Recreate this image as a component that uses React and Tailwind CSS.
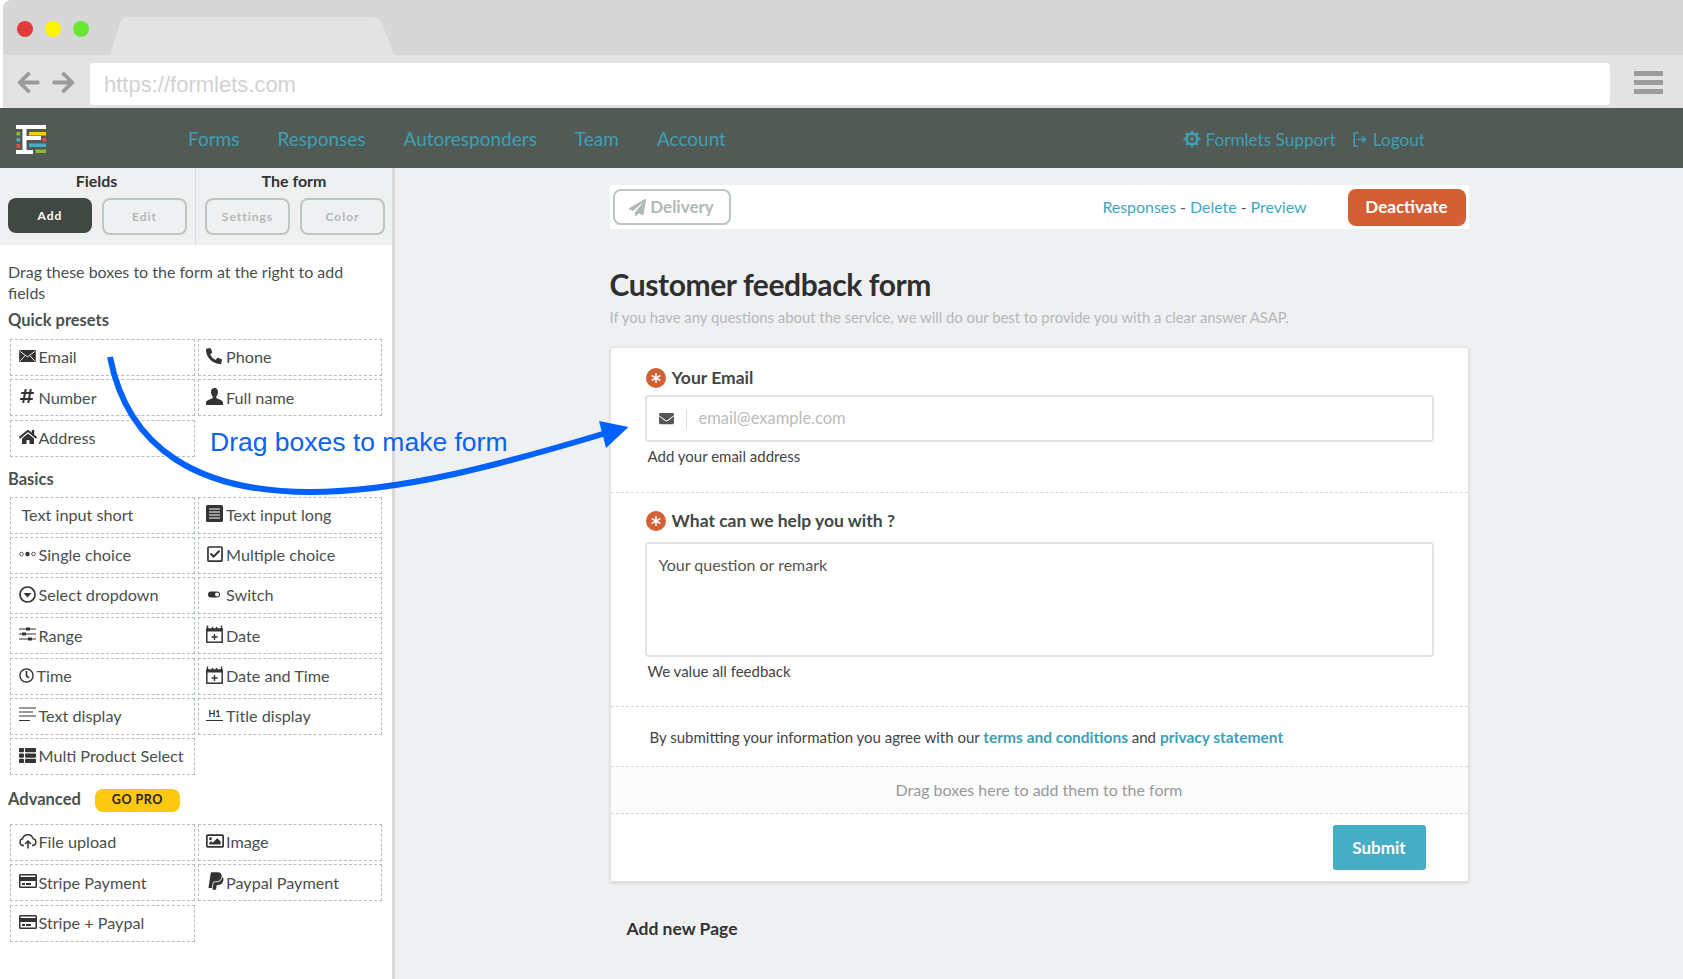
import React from "react";
import {
  FaArrowLeft,
  FaArrowRight,
  FaAsterisk,
  FaEnvelope,
  FaHashtag,
  FaHome,
  FaPaperPlane,
  FaPaypal,
  FaPhoneAlt,
  FaRegCheckSquare,
  FaRegClock,
  FaRegCreditCard,
  FaRegImage,
  FaThList,
} from "react-icons/fa";

const EnvelopeBox = () => (
  <svg viewBox="0 0 18 13" className="w-[17px] h-[12px]">
    <rect width="18" height="13" rx="1" fill="#333" />
    <path d="M1 1.500l8 6 8-6M1 12l5.500-6M17 12l-5.500-6" stroke="#fff" strokeWidth="1" fill="none" />
  </svg>
);

const PersonIcon = () => (
  <svg viewBox="0 0 17 17" className="w-[17px] h-[17px]">
    <path
      d="M8.500 0C6 0 5 1.800 5 4c0 1.800.7 3.400 1.700 4.400.3.500.2 1.400-.4 1.800C4.400 11.400 0 12 0 14.500V17h17v-2.500c0-2.500-4.400-3.100-6.300-4.300-.6-.4-.7-1.300-.4-1.800C11.300 7.400 12 5.800 12 4c0-2.200-1-4-3.500-4z"
      fill="#333"
    />
  </svg>
);

const TextLong = () => (
  <svg viewBox="0 0 17 17" className="w-[17px] h-[17px]">
    <rect width="17" height="17" rx="1.500" fill="#333" />
    <path d="M3 4h11M3 7h11M3 10h11M3 13h11" stroke="#fff" strokeWidth="1.200" />
  </svg>
);

const Dots = () => (
  <svg viewBox="0 0 17 6" className="w-[17px] h-[6px]">
    <circle cx="2.500" cy="3" r="1.800" fill="none" stroke="#333" strokeWidth="0.8" />
    <circle cx="8.500" cy="3" r="2.200" fill="#333" />
    <circle cx="14.500" cy="3" r="1.800" fill="none" stroke="#333" strokeWidth="0.8" />
  </svg>
);

const SelectIcon = () => (
  <svg viewBox="0 0 17 17" className="w-[17px] h-[17px]">
    <circle cx="8.500" cy="8.500" r="7.500" fill="none" stroke="#333" strokeWidth="1.700" />
    <path d="M4.500 7h8l-4 4.500z" fill="#333" />
  </svg>
);

const SwitchIcon = () => (
  <svg viewBox="0 0 17 17" className="w-[17px] h-[17px]">
    <rect x="2" y="5.500" width="12" height="6" rx="3" fill="#333" />
    <circle cx="11" cy="8.500" r="2" fill="#fff" />
  </svg>
);

const RangeIcon = () => (
  <svg viewBox="0 0 17 14" className="w-[17px] h-[14px]">
    <path d="M0 2h17M0 7h17M0 12h17" stroke="#333" strokeWidth="1" />
    <rect x="7" y="0.500" width="4" height="3" fill="#333" />
    <rect x="3" y="5.500" width="4" height="3" fill="#333" />
    <rect x="9" y="10.500" width="4" height="3" fill="#333" />
  </svg>
);

const DateIcon = () => (
  <svg viewBox="0 0 17 18" className="w-[17px] h-[18px]">
    <rect x="0.800" y="4" width="15.400" height="13.200" fill="none" stroke="#333" strokeWidth="1.500" />
    <rect x="0.800" y="4" width="15.400" height="2.500" fill="#333" />
    <path d="M1.500 0.500v4M6.500 2v2M10.500 2v2M15.500 0.500v4M8.500 9v6M5.500 12h6" stroke="#333" strokeWidth="1.400" />
  </svg>
);

const TextDisplay = () => (
  <svg viewBox="0 0 17 15" className="w-[17px] h-[15px]">
    <path d="M0 1h17M0 5h14M0 9h17M0 13.500h11" stroke="#333" strokeWidth="1.200" />
  </svg>
);

const TitleIcon = () => (
  <span className="w-[17px] border-b border-[#333] text-[9px] leading-[10px] font-bold text-center text-[#333] pb-[1px]">
    H1
  </span>
);

const UploadIcon = () => (
  <svg viewBox="0 0 18 15" className="w-[18px] h-[15px]">
    <path
      d="M5 11.500H4.200A3.400 3.400 0 0 1 3.600 4.800 5.400 5.400 0 0 1 14 4.600a3.500 3.500 0 0 1 0 6.900h-1"
      fill="none"
      stroke="#333"
      strokeWidth="1.400"
    />
    <path d="M9 14.500V7.500M6 10l3-3 3 3" fill="none" stroke="#333" strokeWidth="1.500" />
  </svg>
);

const GearIcon = () => (
  <svg viewBox="0 0 18 18" className="w-[18px] h-[18px]">
    <circle cx="9" cy="9" r="5.400" fill="none" stroke="#3d9fb5" strokeWidth="2.600" />
    <circle cx="9" cy="9" r="1.700" fill="#3d9fb5" />
    <path
      d="M9 0.500v3M9 14.500v3M0.500 9h3M14.500 9h3M3 3l2.100 2.100M12.900 12.900L15 15M15 3l-2.100 2.100M5.100 12.900L3 15"
      stroke="#3d9fb5"
      strokeWidth="2.400"
    />
  </svg>
);

const LogoutIcon = () => (
  <svg viewBox="0 0 14 15" className="w-[14px] h-[15px]">
    <path d="M5 1H1.200v13H5" fill="none" stroke="#3d9fb5" strokeWidth="1.600" />
    <path d="M4.500 7.500h7M9 4.500l3.500 3-3.500 3" fill="none" stroke="#3d9fb5" strokeWidth="1.600" />
  </svg>
);

const Logo = () => (
  <svg viewBox="5 115 50 45" className="w-[50px] h-[45px] shrink-0">
    <rect x="15" y="124" width="30" height="4" fill="#fff" />
    <rect x="15" y="149" width="17" height="4" fill="#fff" />
    <rect x="21.500" y="124" width="4" height="29" fill="#fff" />
    <rect x="25" y="135" width="15" height="4" fill="#fff" />
    <rect x="28" y="131" width="17" height="3.500" fill="#fdc90f" />
    <rect x="28" y="142.500" width="17" height="3.500" fill="#45adc4" />
    <rect x="34.500" y="148.500" width="10.500" height="3.500" fill="#8ebc2f" />
    <rect x="15.500" y="131" width="3.500" height="3.500" fill="#8ebc2f" />
    <rect x="15.500" y="137" width="3.500" height="3.500" fill="#45adc4" />
    <rect x="15.500" y="143" width="3.500" height="3.500" fill="#e8503a" />
    <rect x="41.500" y="137" width="3.500" height="3.500" fill="#e8503a" />
  </svg>
);

const ic = "text-[#333] shrink-0";

const presets = [
  { label: "Email", icon: <EnvelopeBox /> },
  { label: "Phone", icon: <FaPhoneAlt className={ic} size={16} /> },
  { label: "Number", icon: <FaHashtag className={ic} size={16} /> },
  { label: "Full name", icon: <PersonIcon /> },
  { label: "Address", icon: <FaHome className={ic} size={18} /> },
];

const basics = [
  { label: "Text input short", indent: true },
  { label: "Text input long", icon: <TextLong /> },
  { label: "Single choice", icon: <Dots /> },
  { label: "Multiple choice", icon: <FaRegCheckSquare className={ic} size={18} /> },
  { label: "Select dropdown", icon: <SelectIcon /> },
  { label: "Switch", icon: <SwitchIcon /> },
  { label: "Range", icon: <RangeIcon /> },
  { label: "Date", icon: <DateIcon /> },
  { label: "Time", icon: <FaRegClock className={ic} size={15} />, tight: true },
  { label: "Date and Time", icon: <DateIcon /> },
  { label: "Text display", icon: <TextDisplay /> },
  { label: "Title display", icon: <TitleIcon /> },
  { label: "Multi Product Select", icon: <FaThList className={ic} size={17} /> },
];

const advanced = [
  { label: "File upload", icon: <UploadIcon /> },
  { label: "Image", icon: <FaRegImage className={ic} size={18} /> },
  { label: "Stripe Payment", icon: <FaRegCreditCard className={ic} size={18} /> },
  { label: "Paypal Payment", icon: <FaPaypal className={ic} size={20} /> },
  { label: "Stripe + Paypal", icon: <FaRegCreditCard className={ic} size={18} /> },
];

const FieldBox = ({ label, icon, indent, tight }) => (
  <div className="h-[37px] flex items-center gap-[2px] pl-[7.500px] border border-dashed border-[#b4c0ba] text-[16.200px] text-[#4a4f4c]">
    {icon && (
      <span className={tight ? "w-[16px] flex shrink-0 -mt-[2px]" : "w-[18px] flex shrink-0 -mt-[3px]"}>{icon}</span>
    )}
    <span className={indent ? "pl-[3px]" : ""}>{label}</span>
  </div>
);

const FieldGrid = ({ items }) => (
  <div className="grid grid-cols-2 gap-x-[3px] gap-y-[3.250px] w-[372px] ml-[2px]">
    {items.map((item) => (
      <FieldBox key={item.label} {...item} />
    ))}
  </div>
);

const TabButton = ({ children, active }) => (
  <button
    className={
      active
        ? "w-[84px] h-[35px] rounded-lg bg-[#3f4842] text-white text-[12px] font-bold tracking-[1px]"
        : "w-[85px] h-[37px] rounded-lg border-2 border-[#bcc7c2] text-[#aebab4] text-[12px] font-bold tracking-[1px]"
    }
  >
    {children}
  </button>
);

const Star = () => (
  <span className="w-[20px] h-[20px] rounded-full bg-[#d35f35] flex items-center justify-center shrink-0">
    <FaAsterisk className="text-white" size={10} />
  </span>
);

const Sidebar = () => (
  <aside className="w-[395px] shrink-0 bg-white border-r-[3px] border-[#d9d9d9]">
    <div className="h-[77px] bg-[#eff0f2] grid grid-cols-[196px_196px]">
      <div className="border-r border-[#dcdde0] pl-[8px]">
        <div className="h-[26px] mb-[4px] flex items-center justify-center font-bold text-[16px] text-[#333] pr-[10px]">
          Fields
        </div>
        <div className="flex gap-[10px]">
          <TabButton active>Add</TabButton>
          <TabButton>Edit</TabButton>
        </div>
      </div>
      <div className="pl-[9px]">
        <div className="h-[26px] mb-[4px] flex items-center justify-center font-bold text-[16px] text-[#333] pr-[9px]">
          The form
        </div>
        <div className="flex gap-[10px]">
          <TabButton>Settings</TabButton>
          <TabButton>Color</TabButton>
        </div>
      </div>
    </div>
    <div className="px-[8px] pt-[16px]">
      <p className="max-w-[350px] text-[16px] leading-[21px] text-[#4a4f4c]">
        Drag these boxes to the form at the right to add fields
      </p>
      <h3 className="mt-[6px] mb-[8px] text-[16.500px] leading-[22px] font-bold text-[#4a524d]">Quick presets</h3>
      <FieldGrid items={presets} />
      <h3 className="mt-[11px] mb-[7px] text-[16.500px] leading-[22px] font-bold text-[#4a524d]">Basics</h3>
      <FieldGrid items={basics} />
      <div className="mt-[12px] mb-[13px] h-[24px] flex items-center gap-[14px]">
        <h3 className="text-[16.500px] font-bold text-[#4a524d]">Advanced</h3>
        <span className="w-[85px] h-[23px] mt-[2px] rounded-lg bg-[#fdc90f] flex items-center justify-center text-[12.500px] font-bold tracking-[0.5px] text-[#222]">
          GO PRO
        </span>
      </div>
      <FieldGrid items={advanced} />
    </div>
  </aside>
);

const FormCard = () => (
  <div className="mt-[20px] h-[535px] bg-white rounded-[3px] border border-[#e3e3e3] shadow-[0_1px_3px_rgba(0,0,0,0.15)] flex flex-col text-[#444]">
    <section className="h-[144px] px-[34px] pt-[18px]">
      <div className="flex items-center gap-[6px] pl-[1px] h-[24px] text-[17.500px] font-bold text-[#3f4842]">
        <Star />
        Your Email
      </div>
      <div className="mt-[5px] h-[47px] rounded-[4px] border-2 border-[#e3e3e3] flex items-center">
        <span className="w-[40px] h-[20px] flex items-center justify-center border-r border-[#ddd] text-[#555]">
          <FaEnvelope size={15} />
        </span>
        <span className="pl-[12px] text-[16.500px] text-[#bbb]">email@example.com</span>
      </div>
      <p className="mt-[4px] pl-[3px] text-[15px] leading-[20px] text-[#444]">Add your email address</p>
    </section>
    <section className="h-[214px] px-[34px] pt-[16px] border-t border-dashed border-[#d8d8d8]">
      <div className="flex items-center gap-[6px] pl-[1px] h-[24px] text-[17.500px] font-bold text-[#3f4842]">
        <Star />
        What can we help you with ?
      </div>
      <div className="mt-[9px] h-[115px] rounded-[4px] border-2 border-[#e3e3e3] pl-[12px] pt-[11px] text-[16px] leading-[20px] text-[#555]">
        Your question or remark
      </div>
      <p className="mt-[4px] pl-[3px] text-[15px] leading-[20px] text-[#444]">We value all feedback</p>
    </section>
    <section className="h-[60px] px-[39px] flex items-center border-t border-dashed border-[#d8d8d8] text-[15px] text-[#444]">
      <p className="pt-[2px]">
        By submitting your information you agree with our{" "}
        <a className="font-bold text-[15.500px] text-[#3d9fb5]">terms and conditions</a> and{" "}
        <a className="font-bold text-[15.500px] text-[#3d9fb5]">privacy statement</a>
      </p>
    </section>
    <section className="h-[47px] flex items-center justify-center border-t border-dashed border-[#d8d8d8] bg-[#fcfcfc] text-[16px] text-[#999]">
      Drag boxes here to add them to the form
    </section>
    <section className="flex-1 flex items-center justify-end pr-[42px] border-t border-dashed border-[#d8d8d8] bg-[#fdfdfd]">
      <button className="w-[93px] h-[45px] rounded-[3px] bg-[#45adc4] text-white text-[17px] font-bold">Submit</button>
    </section>
  </div>
);

const Main = () => (
  <main className="flex-1 bg-[#eff0f2]">
    <div className="w-[859px] mx-auto pt-[17px]">
      <div className="h-[44px] bg-white flex items-center justify-between pl-[3px] pr-[3px]">
        <button className="w-[118px] h-[36px] rounded-lg border-2 border-[#bcc7c2] flex items-center justify-center gap-[4px] text-[17px] font-bold text-[#aebab4]">
          <FaPaperPlane size={17} />
          Delivery
        </button>
        <div className="flex items-center gap-[41px]">
          <div className="text-[16px] text-[#555] tracking-[-0.05px]">
            <a className="text-[#45a7bd]">Responses</a> - <a className="text-[#45a7bd]">Delete</a> -{" "}
            <a className="text-[#45a7bd]">Preview</a>
          </div>
          <button className="w-[118px] h-[37px] rounded-lg bg-[#d35f35] text-white text-[17px] font-bold">
            Deactivate
          </button>
        </div>
      </div>
      <h1 className="mt-[35px] h-[40px] leading-[40px] text-[30px] font-bold text-[#2f2f2f] tracking-[-0.4px]">
        Customer feedback form
      </h1>
      <p className="mt-[3px] h-[20px] leading-[20px] text-[14.850px] text-[#b5b8b8]">
        If you have any questions about the service, we will do our best to provide you with a clear answer ASAP.
      </p>
      <FormCard />
      <div className="mt-[36px] ml-[17px] text-[17.500px] font-bold leading-[22px] text-[#333]">Add new Page</div>
    </div>
  </main>
);

const DragArrow = () => (
  <svg viewBox="0 0 1683 979" className="absolute inset-0 w-full h-full pointer-events-none">
    <path d="M110 357C128 450 200 492 310 492C400 492 500 465 606 433" fill="none" stroke="#0061fe" strokeWidth="6" />
    <path d="M599 421L628.500 427L606 448Z" fill="#0061fe" />
  </svg>
);

export default function App() {
  return (
    <div className="relative w-[1683px] h-[979px] overflow-hidden bg-white flex flex-col [font-family:Lato,sans-serif]">
      <div className="ml-[3px] h-[55px] bg-[#d7d7d7] rounded-tl-lg flex items-start shrink-0">
        <div className="flex gap-[12px] pl-[14px] pt-[21px]">
          <span className="w-[16px] h-[16px] rounded-full bg-[#e33b3b]" />
          <span className="w-[16px] h-[16px] rounded-full bg-[#fcf500]" />
          <span className="w-[16px] h-[16px] rounded-full bg-[#66e82e]" />
        </div>
        <svg viewBox="0 0 284 38" className="w-[284px] h-[38px] mt-[17px] ml-[21px]">
          <path d="M0 38L10 6Q12 0 18 0H262Q270 0 272 6L284 38Z" fill="#e3e3e3" />
        </svg>
      </div>
      <div className="ml-[3px] h-[53px] bg-[#e3e3e3] flex items-center shrink-0">
        <div className="flex items-center gap-[10px] pl-[13px] text-[#9b9b9b] mt-[1px]">
          <FaArrowLeft size={25} />
          <FaArrowRight size={25} />
        </div>
        <div className="ml-[14px] w-[1520px] h-[42px] mt-[5px] bg-white rounded-[3px] flex items-center pl-[14px] text-[22px] text-[#d2d2d2] [font-family:'Liberation_Sans',sans-serif]">
          https://formlets.com
        </div>
        <div className="ml-[24px] flex flex-col gap-[4px] mt-[1px]">
          <span className="w-[29px] h-[5px] bg-[#9b9b9b]" />
          <span className="w-[29px] h-[5px] bg-[#9b9b9b]" />
          <span className="w-[29px] h-[5px] bg-[#9b9b9b]" />
        </div>
      </div>
      <nav className="h-[60px] bg-[#515a54] flex items-center shrink-0 text-[#3d9fb5]">
        <div className="w-[188px] pl-[6px]">
          <Logo />
        </div>
        <div className="flex gap-[38px] text-[19px] pt-[2px]">
          <a>Forms</a>
          <a>Responses</a>
          <a>Autoresponders</a>
          <a>Team</a>
          <a>Account</a>
        </div>
        <div className="ml-auto mr-[258px] flex items-center gap-[17px] text-[17.200px] pt-[3px]">
          <a className="flex items-center gap-[4px]">
            <GearIcon />
            Formlets Support
          </a>
          <a className="flex items-center gap-[6px]">
            <LogoutIcon />
            Logout
          </a>
        </div>
      </nav>
      <div className="flex flex-1 min-h-0">
        <Sidebar />
        <Main />
      </div>
      <DragArrow />
      <div className="absolute left-[210px] top-[425px] text-[26.500px] leading-[34px] text-[#0a62ee] [font-family:'Liberation_Sans',sans-serif]">
        Drag boxes to make form
      </div>
    </div>
  );
}
